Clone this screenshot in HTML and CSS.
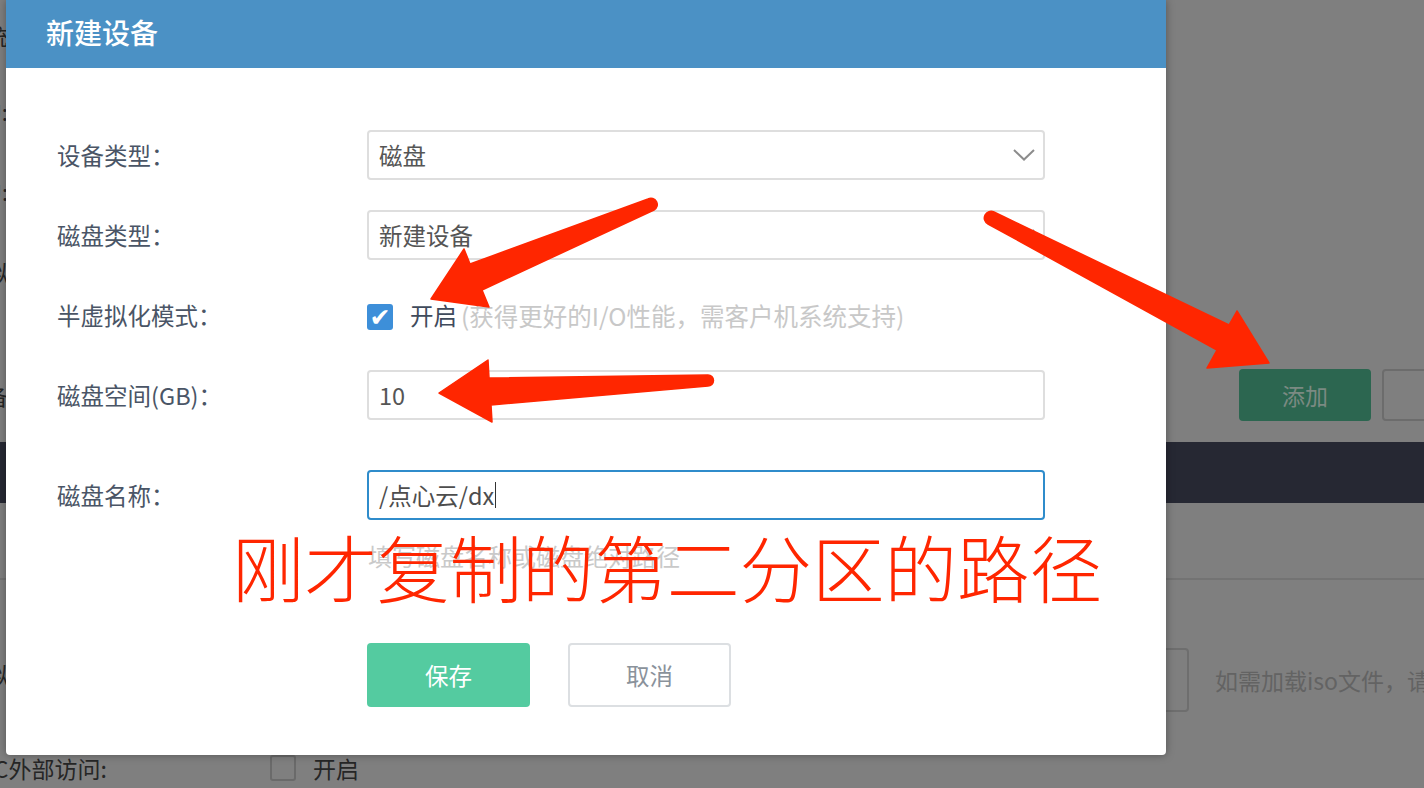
FILE: index.html
```html
<!DOCTYPE html>
<html lang="zh-CN">
<head>
  <meta charset="UTF-8" />
  <title>新建设备</title>
  <link rel="stylesheet" href="styles.css">
</head>
<body>

<!-- 背景页面（被遮罩） -->
<div class="page">
  <div class="bg-row r1"><span class="bg-label">系统</span></div>
  <div class="bg-row r2"><span class="bg-label">CPU:</span></div>
  <div class="bg-row r3"><span class="bg-label">GPU:</span></div>
  <div class="bg-row r4"><span class="bg-label">虚拟</span></div>
  <div class="bg-row r5">
    <span class="bg-label">设备</span>
    <div class="bg-actions">
      <button class="bg-add">添加</button>
      <button class="bg-btn">删除</button>
    </div>
  </div>
  <div class="bg-thead"></div>
  <div class="bg-trow"></div>
  <div class="bg-row r8">
    <span class="bg-label">虚拟</span>
    <div class="bg-input"></div>
    <span class="bg-hint">如需加载iso文件，请先上传</span>
  </div>
  <div class="bg-row r9">
    <span class="bg-label wide">VNC外部访问:</span>
    <span class="bg-check"></span>
    <span class="bg-check-text">开启</span>
  </div>
</div>

<!-- 新建设备弹窗 -->
<div class="modal">
  <div class="modal-header">
    <h3>新建设备</h3>
  </div>
  <div class="modal-body">
    <div class="form-row">
      <label class="form-label">设备类型：</label>
      <div class="input select">
        磁盘
        <svg class="caret" width="22" height="12" viewBox="0 0 22 12"><path d="M1 1 L11 10.5 L21 1" fill="none" stroke="#8c8c8c" stroke-width="2"/></svg>
      </div>
    </div>
    <div class="form-row">
      <label class="form-label">磁盘类型：</label>
      <div class="input select">
        新建设备
        <svg class="caret" width="22" height="12" viewBox="0 0 22 12"><path d="M1 1 L11 10.5 L21 1" fill="none" stroke="#8c8c8c" stroke-width="2"/></svg>
      </div>
    </div>
    <div class="form-row">
      <label class="form-label">半虚拟化模式：</label>
      <div class="check-field">
        <span class="checkbox">✔</span>
        <span class="check-text">开启</span>
        <span class="check-note">(获得更好的I/O性能，需客户机系统支持)</span>
      </div>
    </div>
    <div class="form-row space-row">
      <label class="form-label">磁盘空间(GB)：</label>
      <div class="input">10</div>
    </div>
    <div class="form-row name-row">
      <label class="form-label">磁盘名称：</label>
      <div class="field">
        <div class="input focused">/点心云/dx<span class="cursor"></span></div>
        <div class="help">填写磁盘名称或磁盘绝对路径</div>
      </div>
    </div>
    <div class="form-actions">
      <button class="btn-save">保存</button>
      <button class="btn-cancel">取消</button>
    </div>
  </div>
</div>

<!-- 标注 -->
<svg class="marks" width="1424" height="788" viewBox="0 0 1424 788">
  <path d="M431 299 L464 249 L470 264 L648 199 A6 6 0 0 1 654 210 L482 290 L489 307 Z" />
  <path d="M439 393 L488 360 L489 378 L708 375 A5.5 5.5 0 0 1 708 386 L491 405 L492 422 Z" />
  <path d="M1269 363 L1237 311 L1229 325 L994 212 A6.5 6.5 0 0 0 988 224 L1217 350 L1207 368 Z" />
</svg>
<div class="note">刚才复制的第二分区的路径</div>

</body>
</html>
```

FILE: styles.css
```css
* {
  box-sizing: border-box;
}

body {
  margin: 0;
  width: 1424px;
  height: 788px;
  overflow: hidden;
  position: relative;
  background: #7f7f7f;
  font-family: "Noto Sans CJK SC", "Noto Sans", sans-serif;
}

button {
  font-family: inherit;
}

/* 背景页面 */
.page {
  width: 1530px;
  display: flex;
  flex-direction: column;
  font-size: 22px;
  color: #262626;
}

.bg-row {
  display: flex;
  align-items: center;
}

.bg-label {
  width: 60px;
  margin-left: -52px;
  text-align: right;
  flex-shrink: 0;
  white-space: nowrap;
}

.bg-label.wide {
  width: 306px;
  margin-left: -36px;
  text-align: left;
  font-size: 23px;
}

.r1 { height: 70px; }
.r2 { height: 82px; }
.r3 { height: 78px; }
.r4 { height: 82px; }

.r5 {
  height: 130px;
  align-items: flex-end;
  padding-bottom: 21px;
}

.r5 .bg-label {
  line-height: 52px;
}

.bg-actions {
  margin-left: auto;
  padding-right: 16px;
  display: flex;
  gap: 11px;
}

.bg-add,
.bg-btn {
  width: 132px;
  height: 52px;
  border-radius: 4px;
  font-size: 23px;
}

.bg-add {
  background: #2c6650;
  color: #7b8a82;
  border: none;
}

.bg-btn {
  background: #7f7f7f;
  color: #6a6a6a;
  border: 2px solid #6c6c6c;
}

.bg-thead {
  height: 61px;
  background: #262833;
}

.bg-trow {
  height: 77px;
  border-bottom: 2px solid #737373;
}

.r8 {
  padding-top: 68px;
  height: 132px;
  align-items: flex-start;
}

.r8 .bg-label {
  line-height: 50px;
}

.bg-input {
  margin-left: 264px;
  width: 917px;
  height: 64px;
  border: 2px solid #6e6e6e;
  border-radius: 4px;
}

.bg-hint {
  margin-left: 26px;
  line-height: 64px;
  font-size: 23px;
  color: #636363;
  white-space: nowrap;
}

.r9 {
  height: 112px;
}

.bg-check {
  width: 26px;
  height: 26px;
  border: 2px solid #6a6a6a;
  border-radius: 3px;
}

.bg-check-text {
  margin-left: 17px;
  font-size: 23px;
}

/* 弹窗 */
.modal {
  position: absolute;
  top: 0;
  left: 6px;
  width: 1160px;
  height: 755px;
  background: #fff;
  border-radius: 0 0 4px 4px;
  box-shadow: 0 0 8px rgba(0, 0, 0, 0.35);
  display: flex;
  flex-direction: column;
}

.modal-header {
  height: 68px;
  background: #4b91c5;
  padding-left: 40px;
  display: flex;
  align-items: center;
}

.modal-header h3 {
  margin: 0 0 4px;
  font-size: 28px;
  font-weight: 500;
  color: #fff;
}

.modal-body {
  padding: 62px 0 0 51px;
}

.form-row {
  display: flex;
  align-items: center;
  margin-bottom: 30px;
}

.form-row.space-row {
  margin-bottom: 50px;
}

.form-row.name-row {
  align-items: flex-start;
  margin-bottom: 0;
}

.form-label {
  width: 310px;
  flex-shrink: 0;
  font-size: 23.5px;
  color: #4a5566;
  line-height: 50px;
}

.input {
  width: 678px;
  height: 50px;
  border: 2px solid #dedede;
  border-radius: 4px;
  padding: 0 10px;
  display: flex;
  align-items: center;
  font-size: 23.5px;
  color: #555;
}

.input.select {
  justify-content: space-between;
}

.caret {
  margin-right: -2px;
}

.input.focused {
  border-color: #2f8ccb;
  color: #4d4d4d;
}

.cursor {
  width: 1px;
  height: 26px;
  margin-left: 1px;
  background: #333;
}

.help {
  margin-top: 24px;
  padding-left: 1px;
  font-size: 24px;
  line-height: 24px;
  color: #c9c9c9;
}

.check-field {
  height: 50px;
  display: flex;
  align-items: center;
  font-size: 23.5px;
}

.checkbox {
  width: 26px;
  height: 26px;
  border-radius: 3px;
  background: #3d8fd9;
  display: flex;
  align-items: center;
  justify-content: center;
  margin-top: 4px;
  font-family: "DejaVu Sans", sans-serif;
  font-size: 25px;
  line-height: 1;
  color: #fff;
  overflow: hidden;
}

.check-text {
  margin-left: 17px;
  color: #3f4b5c;
}

.check-note {
  margin-left: 4px;
  font-size: 24.5px;
  color: #c8c8c8;
}

.form-actions {
  margin: 75px 0 0 310px;
  display: flex;
}

.form-actions button {
  width: 163px;
  height: 64px;
  border-radius: 4px;
  font-size: 23.5px;
  cursor: pointer;
}

.btn-save {
  background: #54cba0;
  color: #fff;
  border: none;
}

.btn-cancel {
  margin-left: 38px;
  background: #fff;
  color: #8a929b;
  border: 2px solid #dcdfe2;
}

/* 标注 */
.marks {
  position: absolute;
  top: 0;
  left: 0;
  pointer-events: none;
}

.marks path {
  fill: #ff2600;
  stroke: #ff2600;
  stroke-width: 1.5;
  stroke-linejoin: round;
}

.note {
  position: absolute;
  left: 232px;
  top: 526px;
  font-size: 72.5px;
  line-height: 80px;
  font-weight: 300;
  color: #ff2600;
  white-space: nowrap;
  pointer-events: none;
}
```
